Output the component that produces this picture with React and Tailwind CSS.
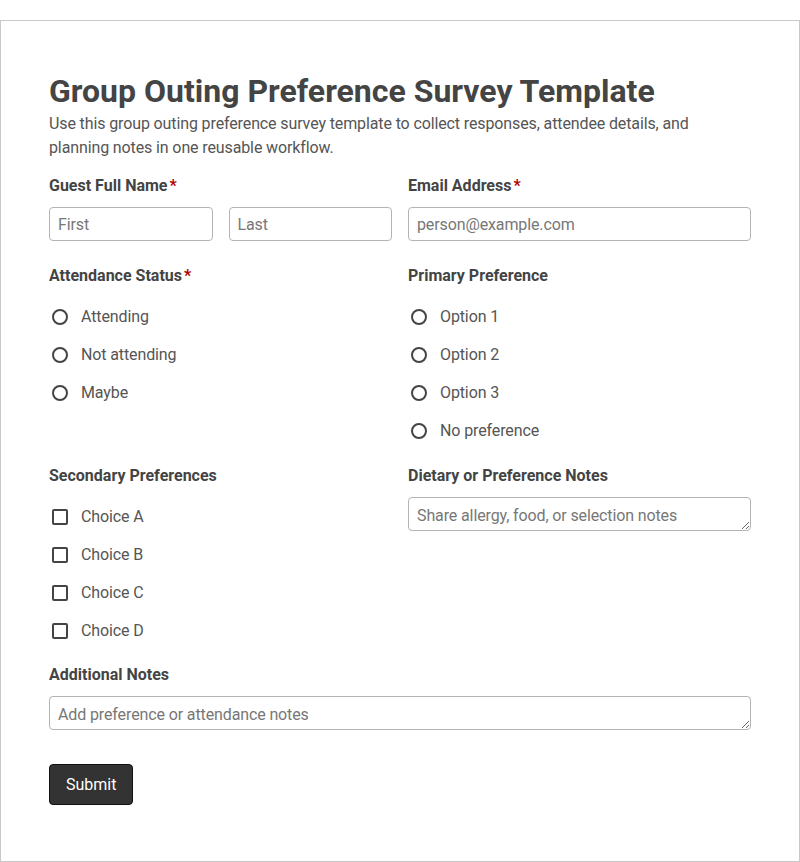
import React from 'react';

const font = { fontFamily: 'Roboto, "Liberation Sans", sans-serif' };

const Label = ({ children, required, className = '' }) => (
    <div className={`h-6 leading-6 text-base font-bold text-[#444] ${className}`}>
        {children}
        {required && <span className="text-[#b00000] ml-[2px]">*</span>}
    </div>
);

const Radio = ({ label }) => (
    <label className="flex items-center h-6 gap-[10px] text-base text-[#555] tracking-[-0.12px]">
        <span className="w-[22px] flex justify-center">
            <span className="w-4 h-4 rounded-full border-2 border-[#444] bg-white" />
        </span>
        <span>{label}</span>
    </label>
);

const Check = ({ label }) => (
    <label className="flex items-center h-6 gap-[10px] text-base text-[#555] tracking-[-0.12px]">
        <span className="w-[22px] flex justify-center">
            <span className="w-4 h-4 rounded-[2px] border-2 border-[#444] bg-white" />
        </span>
        <span>{label}</span>
    </label>
);

const inputClass =
    'w-full h-[34px] px-2 rounded-[4px] border border-[#b3b3b3] text-base tracking-[-0.12px] text-[#333] placeholder:text-[#777] outline-none bg-white';

const areaClass = `${inputClass} block pt-[7px] pb-[3px] leading-[22px]`;

export default function App() {
    return (
        <div className="bg-white pt-5" style={font}>
            <div className="border border-[#c8c8c8] h-[842px] px-12 pt-[51px]">
                <h1 className="text-[32px] leading-[38px] font-bold text-[#444] mb-[2px]">
                    Group Outing Preference Survey Template
                </h1>
                <p className="text-base leading-[23.5px] tracking-[-0.12px] text-[#555] mb-[15px]">
                    Use this group outing preference survey template to collect responses, attendee details, and
                    planning notes in one reusable workflow.
                </p>

                <div className="grid grid-cols-2 gap-x-4 mb-[23px]">
                    <div>
                        <Label required className="mb-[9px]">Guest Full Name</Label>
                        <div className="grid grid-cols-2 gap-x-4">
                            <input className={inputClass} placeholder="First" />
                            <input className={inputClass} placeholder="Last" />
                        </div>
                    </div>
                    <div>
                        <Label required className="mb-[9px]">Email Address</Label>
                        <input className={inputClass} placeholder="person@example.com" />
                    </div>
                </div>

                <div className="grid grid-cols-2 gap-x-4 mb-[21px]">
                    <div>
                        <Label required className="mb-[17px]">Attendance Status</Label>
                        <div className="flex flex-col gap-[14px]">
                            <Radio label="Attending" />
                            <Radio label="Not attending" />
                            <Radio label="Maybe" />
                        </div>
                    </div>
                    <div>
                        <Label className="mb-[17px]">Primary Preference</Label>
                        <div className="flex flex-col gap-[14px]">
                            <Radio label="Option 1" />
                            <Radio label="Option 2" />
                            <Radio label="Option 3" />
                            <Radio label="No preference" />
                        </div>
                    </div>
                </div>

                <div className="grid grid-cols-2 gap-x-4 mb-5">
                    <div>
                        <Label className="mb-[17px]">Secondary Preferences</Label>
                        <div className="flex flex-col gap-[14px]">
                            <Check label="Choice A" />
                            <Check label="Choice B" />
                            <Check label="Choice C" />
                            <Check label="Choice D" />
                        </div>
                    </div>
                    <div>
                        <Label className="mb-[9px]">Dietary or Preference Notes</Label>
                        <textarea rows={1} className={areaClass} placeholder="Share allergy, food, or selection notes" />
                    </div>
                </div>

                <div>
                    <Label className="mb-[9px]">Additional Notes</Label>
                    <textarea rows={1} className={areaClass} placeholder="Add preference or attendance notes" />
                </div>

                <button className="mt-[34px] h-[41px] px-4 rounded-[4px] bg-[#333] border border-[#111] text-white text-base">
                    Submit
                </button>
            </div>
        </div>
    );
}
